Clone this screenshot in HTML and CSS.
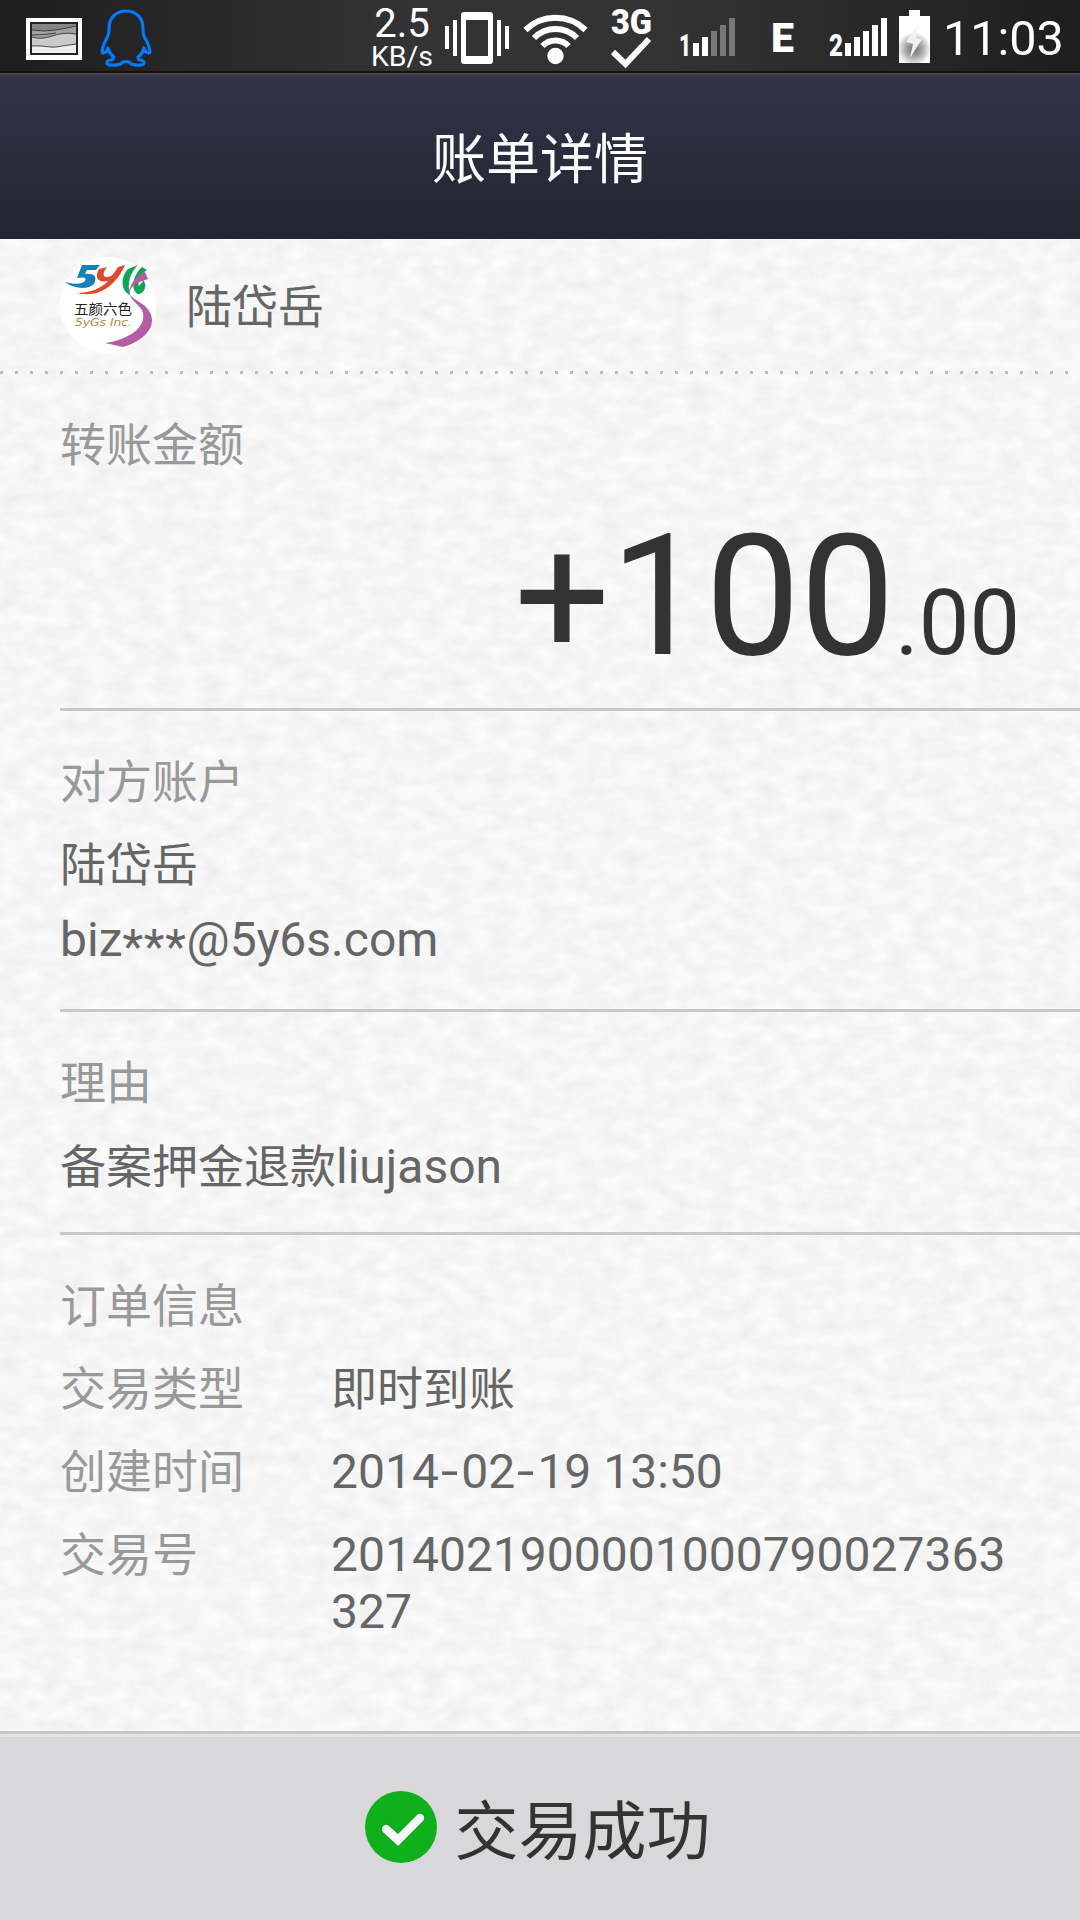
FILE: index.html
```html
<!DOCTYPE html>
<html lang="zh-CN">
<head>
  <meta charset="UTF-8" />
  <meta name="viewport" content="width=device-width, initial-scale=1.0" />
  <title>账单详情</title>
  <link rel="stylesheet" href="styles.css">
</head>
<body>
  <div class="statusbar">
    <svg class="ic-picture" width="56" height="42" viewBox="0 0 56 42">
      <rect width="56" height="42" fill="#fff"/>
      <rect x="4" y="4" width="48" height="33" fill="#222"/>
      <rect x="6" y="6" width="44" height="29" fill="#858585"/>
      <path d="M6 12 Q18 14 30 12 T50 8 V35 H6Z" fill="#a0a0a0"/>
      <path d="M6 19 C22 24 30 12 50 16 V35 H6Z" fill="#cacaca"/>
      <path d="M6 28 C20 27 24 31 36 28 T50 26 V35 H6Z" fill="#eee"/>
      <path d="M6 12 Q18 14 30 12 T50 8 M6 17 Q20 17 30 15 M6 19 C22 24 30 12 50 16 M6 28 C20 27 24 31 36 28 T50 26" fill="none" stroke="#444"/>
    </svg>
    <svg class="ic-qq" width="52" height="60" viewBox="0 0 52 60">
      <path d="M26 3 C15 3 9 11 9 20 V23 C9 27 7 29 6 32 C3 37 1 45 3 45 C5 45 7 43 8 40 C9 44 11 47 14 49 L12 52 C9 52 7 53 7 55 C7 58 20 58 23 54 Q26 53 29 54 C32 58 44 58 44 55 C44 53 42 52 39 52 L38 49 C41 47 43 44 44 40 C45 43 47 45 49 45 C51 45 49 37 46 32 C44 29 43 27 43 23 V20 C43 11 37 3 26 3Z" fill="none" stroke="#007bff" stroke-width="3.2" stroke-linejoin="round"/>
    </svg>
    <div class="speed">
      <span class="speed-num">2.5</span>
      <span class="speed-unit">KB/s</span>
    </div>
    <svg class="ic-vibrate" width="64" height="52" viewBox="0 0 64 52" fill="#fff">
      <path fill-rule="evenodd" d="M19 0 H45 Q48 0 48 3 V49 Q48 52 45 52 H19 Q16 52 16 49 V3 Q16 0 19 0Z M21 8 V44 H43 V8Z"/>
      <rect x="0" y="14" width="4" height="23"/>
      <rect x="8" y="8" width="4" height="36"/>
      <rect x="52" y="8" width="4" height="36"/>
      <rect x="60" y="14" width="4" height="23"/>
    </svg>
    <svg class="ic-wifi" width="66" height="54" viewBox="0 0 66 54">
      <g fill="none" stroke="#fff" stroke-width="6">
        <path d="M2.5 20 A43 43 0 0 1 62.500 20"/>
        <path d="M11 28 A30 30 0 0 1 54 28"/>
        <path d="M19.500 36 A18 18 0 0 1 45.500 36"/>
      </g>
      <circle cx="32.500" cy="46" r="8.200" fill="#fff"/>
    </svg>
    <svg class="ic-3g" width="42" height="60" viewBox="0 0 42 60">
      <text x="0" y="26" class="tiny-tag" font-size="35" textLength="41" lengthAdjust="spacingAndGlyphs">3G</text>
      <path d="M2 44 L14.500 56 L38 31" fill="none" stroke="#fff" stroke-width="6"/>
    </svg>
    <svg class="ic-signal1" width="56" height="40" viewBox="0 0 56 40" fill="#fff">
      <text x="-1" y="38" class="tiny-tag" font-size="31" textLength="12" lengthAdjust="spacingAndGlyphs">1</text>
      <rect x="13" y="25" width="6" height="13"/>
      <rect x="22" y="19" width="6" height="19"/>
      <g fill="#777">
        <rect x="31" y="13" width="6" height="25"/>
        <rect x="40" y="7" width="6" height="31"/>
        <rect x="49" y="0" width="6" height="38"/>
      </g>
    </svg>
    <span class="edge">E</span>
    <svg class="ic-signal2" width="58" height="40" viewBox="0 0 58 40" fill="#fff">
      <text x="0" y="38" class="tiny-tag" font-size="31" textLength="14" lengthAdjust="spacingAndGlyphs">2</text>
      <rect x="16" y="25" width="6" height="13"/>
      <rect x="25" y="19" width="6" height="19"/>
      <rect x="34" y="13" width="6" height="25"/>
      <rect x="43" y="7" width="6" height="31"/>
      <rect x="52" y="0" width="6" height="38"/>
    </svg>
    <svg class="ic-battery" width="31" height="53" viewBox="0 0 31 53">
      <defs>
        <radialGradient id="charge" cx="15" cy="39" r="17" gradientUnits="userSpaceOnUse">
          <stop offset="0" stop-color="#707070"/>
          <stop offset="0.500" stop-color="#a8a8a8"/>
          <stop offset="1" stop-color="#fff"/>
        </radialGradient>
      </defs>
      <path d="M10 0 H21 V6 H31 V53 H0 V6 H10Z" fill="url(#charge)"/>
      <path d="M19 15 L7 32 L14 34 L11 48 L23 29 L17 28Z" fill="#f0f0f0"/>
    </svg>
    <span class="clock">11:03</span>
  </div>

  <header>
    <h1>账单详情</h1>
  </header>

  <main>
    <!-- paper grain behind the bill -->
    <svg class="paper" width="1080" height="1492">
      <filter id="grain" x="0" y="0" width="100%" height="100%" color-interpolation-filters="sRGB">
        <feTurbulence type="fractalNoise" baseFrequency="0.045 0.075" numOctaves="3" seed="8"/>
        <feColorMatrix values="0.075 0 0 0 0.926  0.075 0 0 0 0.926  0.075 0 0 0 0.926  0 0 0 0 1"/>
      </filter>
      <rect width="1080" height="1492" filter="url(#grain)"/>
    </svg>

    <div class="payer">
      <svg class="avatar" width="96" height="96" viewBox="0 0 96 96">
        <circle cx="48" cy="48" r="48" fill="#fff"/>
        <path d="M22 8 L40 8 L36 13 H27 L25 17 C36 16 37 21 34 27 C28 33 14 32 5 25 C16 28 22 27 25 24 C27 20 23 20 17 21Z" fill="#1780b8"/>
        <path d="M39 12 L47 10 C43 15 42 20 47 20 C52 20 55 15 58 10 L65 8 C58 24 43 42 17 36 C30 36 42 31 48 24 C38 26 34 21 39 12Z" fill="#e04a2b"/>
        <path d="M68 12 L78 8 C70 16 67 26 70 38 C61 34 60 21 68 12Z M82 10 L87 13 C80 17 77 25 79 29 C81 26 83 25 83 23 C89 30 82 38 78 37 C70 33 73 18 82 10Z" fill="#11a457"/>
        <path d="M83 16 C79 19 73 22 70 31 C66 39 76 42 85 49 C101 64 88 83 63 90 L45 86 C66 83 86 72 83 56 C81 47 68 44 70 34 C71 29 78 25 88 22 L85 15Z" fill="#b55aa5"/>
        <text x="14" y="57" class="logo-cn" textLength="58" lengthAdjust="spacingAndGlyphs">五颜六色</text>
        <text x="15" y="69" class="logo-en" textLength="57" lengthAdjust="spacingAndGlyphs">5yGs Inc.</text>
      </svg>
      <span class="payer-name">陆岱岳</span>
      <div class="dots"></div>
    </div>

    <section class="amount-section">
      <p class="label">转账金额</p>
      <p class="amount">+100<small>.00</small></p>
    </section>

    <section class="account">
      <p class="label">对方账户</p>
      <p class="value">陆岱岳</p>
      <p class="value latin email">biz<span class="stars">***</span>@5y6s.com</p>
    </section>

    <section class="reason">
      <p class="label">理由</p>
      <p class="value">备案押金退款<span class="latin">liujason</span></p>
    </section>

    <section class="order">
      <p class="label">订单信息</p>
      <div class="row">
        <span class="label">交易类型</span>
        <span class="value">即时到账</span>
      </div>
      <div class="row">
        <span class="label">创建时间</span>
        <span class="value latin">2014<span class="dash">-</span>02<span class="dash">-</span>19 13:50</span>
      </div>
      <div class="row">
        <span class="label">交易号</span>
        <span class="value latin">2014021900001000790027363327</span>
      </div>
    </section>
  </main>

  <footer>
    <svg width="72" height="72" viewBox="0 0 72 72">
      <circle cx="36" cy="36" r="36" fill="#0eb01c"/>
      <path d="M21 38 L33 49 L55 27" fill="none" stroke="#079914" stroke-width="11" stroke-linecap="round" stroke-linejoin="round" opacity="0.500"/>
      <path d="M21 38 L33 49 L55 27" fill="none" stroke="#f7f7f7" stroke-width="8.500" stroke-linecap="round"/>
    </svg>
    <span>交易成功</span>
  </footer>
</body>
</html>
```
FILE: styles.css
```css
* {
  box-sizing: border-box;
}
body {
  margin: 0;
  width: 1080px;
  height: 1920px;
  display: flex;
  flex-direction: column;
  overflow: hidden;
  font-family: Roboto, 'Noto Sans CJK SC', sans-serif;
  background-color: #f6f6f6;
}
h1, p {
  margin: 0;
  font-weight: 400;
}
svg {
  display: block;
  flex: none;
}

/* status bar */
.statusbar {
  height: 75px;
  flex: none;
  display: flex;
  align-items: flex-start;
  padding-left: 26px;
  color: #fff;
  background: linear-gradient(90deg, #1e1e1e, #333 38%, #333 62%, #1e1e1e);
  border-bottom: 2px solid #484848;
  box-shadow: inset 0 -2px 0 #111;
}
.statusbar svg {
  overflow: visible;
}
.ic-picture { margin-top: 18px; }
.ic-qq { margin: 8px 0 0 18px; }
.speed {
  width: 72px;
  margin: 5px 0 0 214px;
  display: flex;
  flex-direction: column;
  align-items: center;
}
.speed-num {
  font-size: 40px;
  line-height: 37px;
}
.speed-unit {
  font-size: 28.5px;
  line-height: 29px;
}
.ic-vibrate { margin: 12px 0 0 7px; }
.ic-wifi { margin: 10px 0 0 14px; }
.ic-3g { margin: 8px 0 0 22px; }
.ic-signal1 { margin: 18px 0 0 27px; }
.ic-signal2 { margin: 18px 0 0 32px; }
.ic-battery { margin: 10px 0 0 12px; }
.tiny-tag {
  font-family: Roboto, sans-serif;
  font-weight: 900;
  fill: #fff;
}
.edge {
  width: 26px;
  margin: 14px 0 0 35px;
  font-size: 41px;
  font-weight: 900;
  line-height: 48px;
}
.clock {
  margin: 10px 0 0 13px;
  font-size: 48.5px;
  line-height: 58px;
}

/* title */
header {
  height: 164px;
  flex: none;
  display: flex;
  align-items: center;
  justify-content: center;
  background: linear-gradient(#34364a, #303347 8%, #242530);
  color: #fff;
}
h1 {
  font-size: 54px;
  line-height: 80px;
  margin-top: 7px;
}

/* bill */
main {
  position: relative;
  height: 1492px;
  flex: none;
  z-index: 0;
}
.paper {
  position: absolute;
  top: 0;
  left: 0;
  z-index: -1;
}
.payer {
  height: 135px;
  display: grid;
  grid-template-columns: 96px 1fr;
  column-gap: 30px;
  padding: 18px 0 0 60px;
  grid-template-rows: 114px 3px;
}
.payer-name {
  font-size: 46px;
  line-height: 101px;
  color: #666;
}
.dots {
  grid-column: 1 / 3;
  height: 3px;
  margin-left: -60px;
  background: repeating-linear-gradient(90deg, #bbb 0 3px, transparent 3px 15px);
}
section {
  margin-left: 60px;
  padding-top: 43px;
  border-bottom: 3px solid #c9c9c9;
}
.label, .value {
  font-size: 46px;
  line-height: 57px;
  color: #666;
}
.label {
  color: #999;
}
.latin {
  font-size: 48px;
}
.amount-section { height: 337px; }
.account { height: 301px; }
.reason { height: 223px; }
.order { border-bottom: none; }
.amount {
  margin-top: 22px;
  padding-right: 60px;
  text-align: right;
  font-size: 169px;
  line-height: 200px;
  color: #333;
}
.amount small {
  font-size: 90px;
}
.account .value, .reason .value {
  margin-top: 26px;
}
.account .email {
  margin-top: 17px;
}
.stars {
  letter-spacing: 0.7px;
  line-height: 0;
  vertical-align: -7px;
}
.row {
  display: flex;
  margin-top: 26px;
}
.row .label {
  width: 271px;
  flex: none;
}
.row .value {
  width: 690px;
  word-break: break-all;
}
.row .latin {
  margin: -1px 0;
}
.dash {
  display: inline-block;
  margin: 0 5px 0 4px;
  transform: scaleX(1.3);
}

/* result */
footer {
  flex: 1;
  display: flex;
  align-items: center;
  justify-content: center;
  gap: 18px;
  padding: 0 5px 1px 0;
  background-color: #d8d8da;
  border-top: 3px solid #c6c6c8;
  box-shadow: inset 0 3px 0 #e4e4e6;
  font-size: 64px;
  line-height: 90px;
  color: #333;
}
footer span {
  margin-top: 12px;
}

/* avatar lettering */
.logo-cn {
  font-family: 'Noto Sans CJK SC', sans-serif;
  font-size: 14px;
  fill: #222;
}
.logo-en {
  font-family: 'DejaVu Sans', sans-serif;
  font-size: 10px;
  font-style: italic;
  fill: #c18140;
}
```
